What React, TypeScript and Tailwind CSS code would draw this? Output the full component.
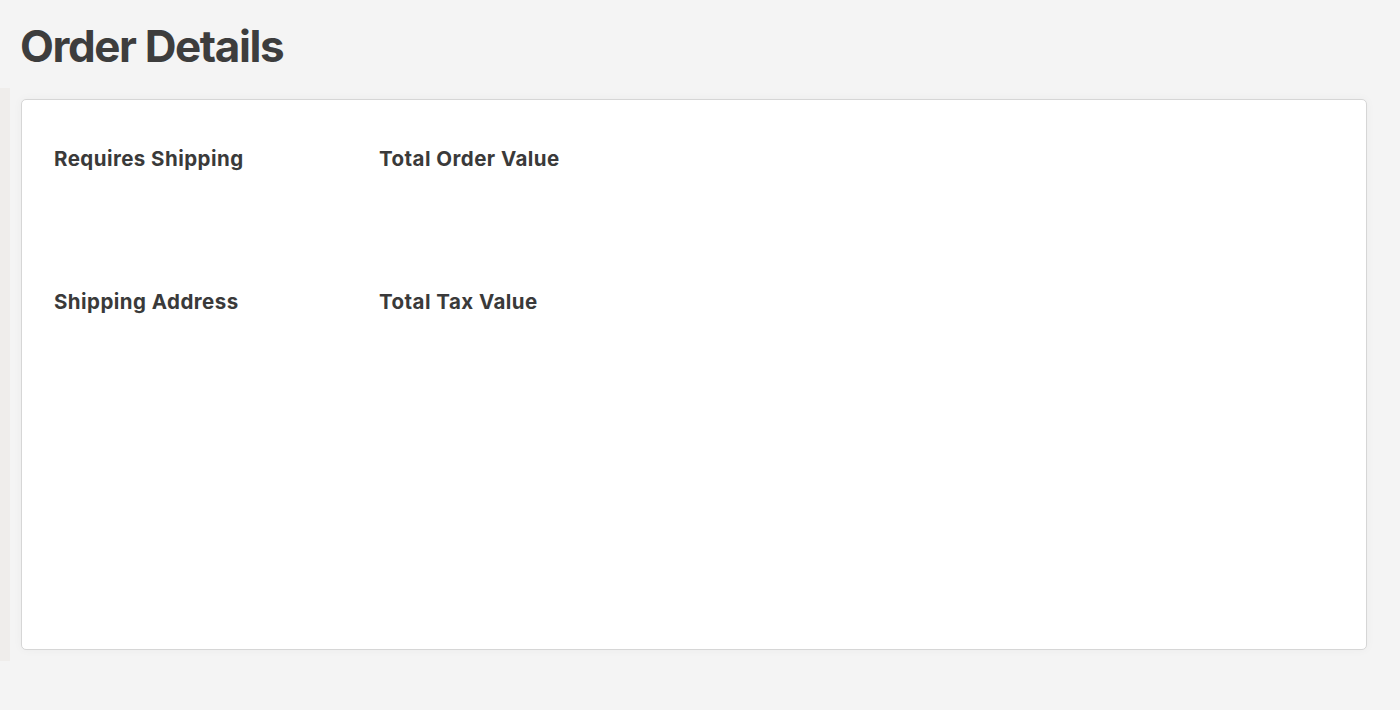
export default function App() {
  return (
    <div className="min-h-[710px] w-[1400px] bg-[#f4f4f4] font-['Inter',sans-serif] text-[#3d3d3d]">
      <div className="px-[20px] pt-[20px]">
        <h1 className="text-[44px] font-bold leading-[52px] tracking-[-1.4px]">Order Details</h1>
      </div>
      <div className="mt-[27px] flex">
        <div className="my-[-11px] w-[10px] bg-[#efedeb]" />
        <div className="ml-[11px] h-[551px] w-[1346px] rounded-[5px] border border-[#d6d6d6] bg-white shadow-[0_0_10px_rgba(0,0,0,0.04)] px-[32px] pt-[45px]">
          <div className="grid grid-cols-[325px_1fr] gap-y-[115px] text-[20.5px] font-bold leading-[28px] tracking-[0.45px] text-[#3a3a3a]">
            <div>Requires Shipping</div>
            <div>Total Order Value</div>
            <div>Shipping Address</div>
            <div>Total Tax Value</div>
          </div>
        </div>
      </div>
    </div>
  );
}
